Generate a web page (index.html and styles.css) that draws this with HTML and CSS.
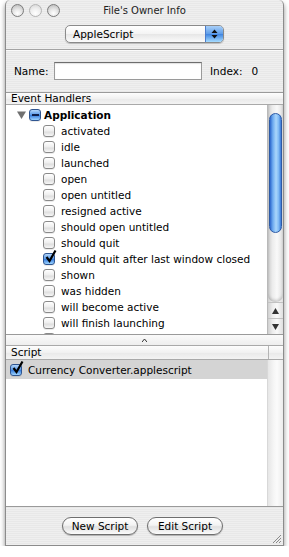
FILE: index.html
```html
<!DOCTYPE html>
<html lang="en">
<head>
  <meta charset="UTF-8" />
  <title>File's Owner Info</title>
  <link rel="stylesheet" href="styles.css">
</head>
<body>
  <div class="window">
    <!-- Title bar -->
    <div class="titlebar">
      <div class="lights">
        <span class="light"></span>
        <span class="light dim"></span>
        <span class="light"></span>
      </div>
      <div class="title">File's Owner Info</div>
    </div>

    <!-- Inspector pane chooser -->
    <div class="popup-row">
      <div class="popup">
        <span class="popup-label">AppleScript</span>
        <span class="popup-arrows">
          <svg width="7" height="10" viewBox="0 0 7 10"><path d="M3.5 0.5 L6.5 4 L0.5 4 Z M0.5 6 L6.5 6 L3.5 9.5 Z" fill="#111"/></svg>
        </span>
      </div>
    </div>
    <div class="separator"></div>

    <div class="name-row">
      <span class="name-label">Name:</span>
      <span class="text-field"></span>
      <span class="index">Index:</span>
      <span class="index-value">0</span>
    </div>

    <!-- Event handlers outline -->
    <div class="pane handlers">
      <div class="table-header"><span class="col">Event Handlers</span></div>
      <div class="table-body">
        <div class="rows">
          <div class="row group">
            <svg class="disclosure" width="9" height="8" viewBox="0 0 9 8"><path d="M0 0.5 L9 0.5 L4.5 8 Z" fill="#707070"/></svg>
            <span class="cb on"><span class="dash"></span></span>
            <span class="label bold">Application</span>
          </div>
          <div class="row item"><span class="cb"></span><span class="label">activated</span></div>
          <div class="row item"><span class="cb"></span><span class="label">idle</span></div>
          <div class="row item"><span class="cb"></span><span class="label">launched</span></div>
          <div class="row item"><span class="cb"></span><span class="label">open</span></div>
          <div class="row item"><span class="cb"></span><span class="label">open untitled</span></div>
          <div class="row item"><span class="cb"></span><span class="label">resigned active</span></div>
          <div class="row item"><span class="cb"></span><span class="label">should open untitled</span></div>
          <div class="row item"><span class="cb"></span><span class="label">should quit</span></div>
          <div class="row item">
            <span class="cb on"><svg class="tick" width="11" height="13" viewBox="0 0 11 13"><path d="M1.5 7 L4.5 11 L10.5 0.5" fill="none" stroke="#000" stroke-width="2.2"/></svg></span>
            <span class="label">should quit after last window closed</span>
          </div>
          <div class="row item"><span class="cb"></span><span class="label">shown</span></div>
          <div class="row item"><span class="cb"></span><span class="label">was hidden</span></div>
          <div class="row item"><span class="cb"></span><span class="label">will become active</span></div>
          <div class="row item"><span class="cb"></span><span class="label">will finish launching</span></div>
          <div class="row item"><span class="cb"></span><span class="label">will hide</span></div>
        </div>
        <div class="scroller">
          <div class="trough"><div class="thumb"></div></div>
          <div class="arrow">
            <svg width="7" height="6" viewBox="0 0 7 6"><path d="M3.5 0 L7 6 L0 6 Z" fill="#333"/></svg>
          </div>
          <div class="arrow">
            <svg width="7" height="6" viewBox="0 0 7 6"><path d="M0 0 L7 0 L3.5 6 Z" fill="#333"/></svg>
          </div>
        </div>
      </div>
    </div>

    <div class="splitter">
      <svg width="5" height="3" viewBox="0 0 5 3"><path d="M0 3 L2.5 0 L5 3" fill="none" stroke="#333" stroke-width="1"/></svg>
    </div>

    <!-- Scripts table -->
    <div class="pane scripts">
      <div class="table-header"><span class="col">Script</span><span class="corner"></span></div>
      <div class="table-body">
        <div class="rows">
          <div class="row script selected">
            <span class="cb on"><svg class="tick" width="11" height="13" viewBox="0 0 11 13"><path d="M1.5 7 L4.5 11 L10.5 0.5" fill="none" stroke="#000" stroke-width="2.2"/></svg></span>
            <span class="label">Currency Converter.applescript</span>
          </div>
        </div>
        <div class="empty-scroller"></div>
      </div>
    </div>

    <div class="button-bar">
      <button class="pill">New Script</button>
      <button class="pill">Edit Script</button>
      <svg class="grip" width="9" height="9" viewBox="0 0 9 9">
        <path d="M1 9 L9 1 M4 9 L9 4 M7 9 L9 7" stroke="#8a8a8a" stroke-width="1"/>
      </svg>
    </div>
  </div>
</body>
</html>
```

FILE: styles.css
```css
body {
  margin: 0;
  background: #fff;
  font-family: "DejaVu Sans", sans-serif;
  font-size: 10.5px;
  color: #000;
}

.window {
  margin-left: 5px;
  width: 279px;
  height: 546px;
  box-sizing: border-box;
  border: 1px solid #8c8c8c;
  border-top: none;
  border-radius: 5px 5px 0 0;
  background: repeating-linear-gradient(#efefef 0, #efefef 1px, #e8e8e8 1px, #e8e8e8 2px);
  box-shadow: 0 3px 5px rgba(0, 0, 0, 0.45);
  display: flex;
  flex-direction: column;
}

/* title bar */

.titlebar {
  height: 20px;
  display: flex;
  align-items: center;
  flex-shrink: 0;
}

.lights {
  display: flex;
  gap: 5px;
  padding-left: 5px;
}

.light {
  width: 13px;
  height: 13px;
  box-sizing: border-box;
  border-radius: 50%;
  border: 1px solid #7c7c7c;
  background: radial-gradient(circle at 50% 75%, #ffffff 0, #e4e4e4 45%, #b4b4b4 100%);
}

.light.dim {
  border-color: #b4b4b4;
  background: radial-gradient(circle at 50% 75%, #ffffff 0, #eeeeee 50%, #d2d2d2 100%);
}

.title {
  flex: 1;
  text-align: center;
  margin-right: 54px;
  font-size: 10px;
  color: #222;
}

/* popup */

.popup-row {
  height: 29px;
  box-sizing: border-box;
  padding: 5px 0 0 59px;
  flex-shrink: 0;
}

.popup {
  width: 159px;
  height: 18px;
  box-sizing: border-box;
  border: 1px solid #8a8a8a;
  border-radius: 5px;
  background: linear-gradient(#ffffff, #f3f3f3 50%, #e6e6e6 51%, #fbfbfb);
  box-shadow: 0 1px 1px rgba(0, 0, 0, 0.2);
  display: flex;
  align-items: center;
  overflow: hidden;
}

.popup-label {
  flex: 1;
  padding-left: 7px;
}

.popup-arrows {
  width: 17px;
  height: 100%;
  display: flex;
  align-items: center;
  justify-content: center;
  border-left: 1px solid #4a7ccc;
  background: linear-gradient(#a8cff8, #5d9ce8 50%, #3f84e0 51%, #a6dcff);
}

.separator {
  border-top: 1px solid #a3a3a3;
  border-bottom: 1px solid #fbfbfb;
  flex-shrink: 0;
}

/* name row */

.name-row {
  height: 41px;
  box-sizing: border-box;
  padding: 11px 0 0 8px;
  display: flex;
  align-items: flex-start;
  line-height: 18px;
  flex-shrink: 0;
}

.name-label {
  width: 40px;
}

.text-field {
  width: 148px;
  height: 18px;
  box-sizing: border-box;
  background: #fff;
  border: 1px solid #9a9a9a;
  border-top-color: #6e6e6e;
  box-shadow: inset 0 1px 1px rgba(0, 0, 0, 0.12);
}

.index {
  margin-left: 8px;
}

.index-value {
  margin-left: 9px;
}

/* tables */

.pane {
  display: flex;
  flex-direction: column;
  flex-shrink: 0;
}

.table-header {
  display: flex;
  box-sizing: border-box;
  border-top: 1px solid #9a9a9a;
  border-bottom: 1px solid #a9a9a9;
  background: linear-gradient(#fdfdfd, #f1f1f1 50%, #e9e9e9 51%, #f3f3f3);
}

.handlers .table-header {
  height: 13px;
  line-height: 11px;
}

.scripts .table-header {
  height: 14px;
  line-height: 12px;
  border-top: none;
}

.col {
  flex: 1;
  padding-left: 5px;
}

.scripts .col {
  border-right: 1px solid #b4b4b4;
}

.corner {
  width: 14px;
}

.table-body {
  display: flex;
  background: #fff;
}

.handlers .table-body {
  height: 229px;
}

.scripts .table-body {
  height: 147px;
  box-sizing: border-box;
  border-bottom: 1px solid #9a9a9a;
}

.rows {
  flex: 1;
  overflow: hidden;
}

.handlers .rows {
  padding-top: 2px;
}

.row {
  height: 16px;
  display: flex;
  align-items: center;
  white-space: nowrap;
}

.row.group {
  padding-left: 11px;
}

.row.item {
  padding-left: 37px;
}

.row.script {
  height: 19px;
  padding-left: 4px;
}

.row.selected {
  background: #d4d4d4;
}

.disclosure {
  margin-right: 3px;
}

.label {
  margin-left: 6px;
}

.group .label {
  margin-left: 3px;
}

.bold {
  font-weight: bold;
}

/* checkboxes */

.cb {
  position: relative;
  width: 12px;
  height: 12px;
  box-sizing: border-box;
  border: 1px solid #8a8a8a;
  border-radius: 3px;
  background: linear-gradient(#ffffff, #eeeeee 50%, #dedede 60%, #f7f7f7);
  box-shadow: 0 1px 0 rgba(0, 0, 0, 0.08);
  flex-shrink: 0;
  display: flex;
  align-items: center;
  justify-content: center;
}

.cb.on {
  border-color: #2f5590;
  background: linear-gradient(#b3d6fa, #5e9ce8 45%, #3b80de 55%, #9dd4ff);
}

.cb .dash {
  width: 7px;
  height: 2px;
  background: #10204a;
}

.tick {
  position: absolute;
  left: 1px;
  top: -4px;
  overflow: visible;
}

/* scrollers */

.scroller {
  width: 15px;
  display: flex;
  flex-direction: column;
  border-left: 1px solid #b9b9b9;
  background: linear-gradient(to right, #cfcfcf, #ececec 30%, #f9f9f9 60%, #e0e0e0);
}

.trough {
  flex: 1;
  border-radius: 0 0 7px 7px;
  box-shadow: inset 0 -2px 3px rgba(0, 0, 0, 0.18);
  padding-top: 8px;
}

.thumb {
  height: 120px;
  margin: 0 1px;
  box-sizing: border-box;
  border: 1px solid #2d5aa5;
  border-radius: 7px;
  background: linear-gradient(to right, #2c66cc, #6ca9ef 25%, #aad6fb 55%, #7cb7f4 80%, #3a78d5);
}

.arrow {
  height: 15px;
  display: flex;
  align-items: center;
  justify-content: center;
  border-top: 1px solid #c2c2c2;
}

.empty-scroller {
  width: 15px;
  border-left: 1px solid #d8d8d8;
  background: linear-gradient(to right, #e6e6e6, #f6f6f6 40%, #fbfbfb 60%, #ececec);
}

.splitter {
  height: 12px;
  box-sizing: border-box;
  border-top: 1px solid #9a9a9a;
  border-bottom: 1px solid #a9a9a9;
  background: linear-gradient(#fafafa, #eeeeee);
  display: flex;
  align-items: center;
  justify-content: center;
  flex-shrink: 0;
}

/* bottom buttons */

.button-bar {
  position: relative;
  flex: 1;
  display: flex;
  align-items: flex-start;
  gap: 9px;
  padding: 10px 0 0 56px;
}

.pill {
  width: 76px;
  height: 18px;
  padding: 0;
  border: 1px solid #6e6e6e;
  border-radius: 9px;
  background: linear-gradient(#ffffff, #f3f3f3 45%, #e0e0e0 55%, #fbfbfb);
  box-shadow: 0 1px 1px rgba(0, 0, 0, 0.25);
  font-family: "DejaVu Sans", sans-serif;
  font-size: 10.5px;
  color: #000;
}

.grip {
  position: absolute;
  right: 2px;
  bottom: 2px;
}
```
